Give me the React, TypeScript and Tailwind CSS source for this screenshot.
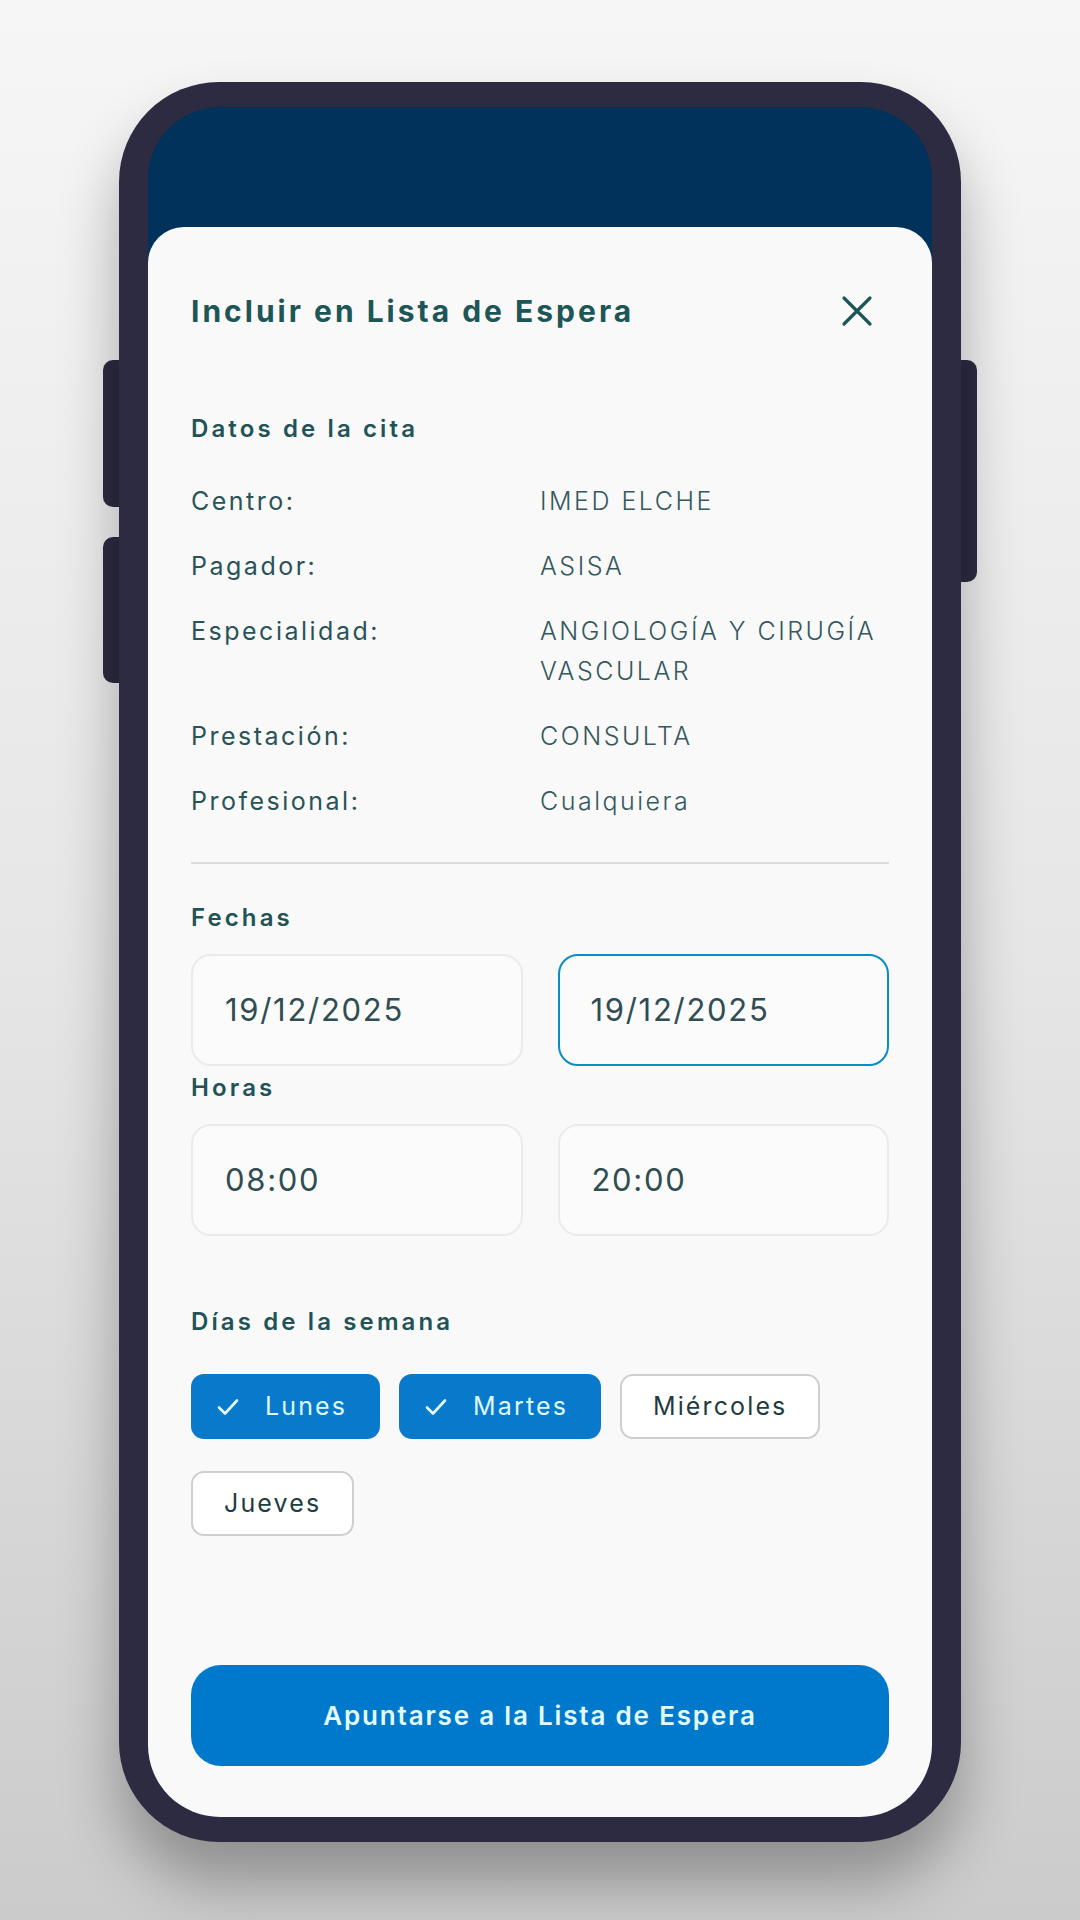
const rows = [
  { label: "Centro:", value: ["IMED ELCHE"] },
  { label: "Pagador:", value: ["ASISA"] },
  { label: "Especialidad:", value: ["ANGIOLOGÍA Y CIRUGÍA", "VASCULAR"] },
  { label: "Prestación:", value: ["CONSULTA"] },
  { label: "Profesional:", value: ["Cualquiera"] },
];

const days = [
  { name: "Lunes", on: true },
  { name: "Martes", on: true },
  { name: "Miércoles", on: false },
  { name: "Jueves", on: false },
];

function CloseIcon() {
  return (
    <svg width="32" height="32" viewBox="0 0 32 32" fill="none">
      <path d="M3 3 L29 29 M29 3 L3 29" stroke="#1d5656" strokeWidth="3.2" strokeLinecap="round" />
    </svg>
  );
}

function Check() {
  return (
    <svg width="22" height="18" viewBox="0 0 22 18" fill="none">
      <path d="M2 9.5 L8 15.5 L20 2.5" stroke="#e4fbff" strokeWidth="2.6" strokeLinecap="round" strokeLinejoin="round" />
    </svg>
  );
}

function Field({ value, active }: { value: string; active?: boolean }) {
  return (
    <div
      className={
        active
          ? "h-[112px] rounded-[20px] border-[2.5px] border-[#0a8cc4] bg-[#fbfbfb] flex items-center pl-[31px] text-[31px] tracking-[0.055em] text-[#2f4d53]"
          : "h-[112px] rounded-[20px] border-2 border-[#ebebeb] bg-[#fbfbfb] flex items-center pl-[32px] text-[31px] tracking-[0.055em] text-[#2f4d53]"
      }
    >
      {value}
    </div>
  );
}

function SectionTitle({ children, className }: { children: string; className: string }) {
  return (
    <h2 className={"text-[24px] leading-[32px] font-semibold tracking-[0.13em] text-[#1f5357] " + className}>
      {children}
    </h2>
  );
}

export default function App() {
  return (
    <div
      className="w-[1080px] h-[1920px] bg-linear-to-b from-[#f6f6f6] via-[#e6e6e6] to-[#cbcbcb] pt-[82px] overflow-hidden"
      style={{ fontFamily: "Inter, 'Noto Sans', sans-serif" }}
    >
      <div className="relative mx-auto w-[842px] h-[1760px]">
        {/* side buttons */}
        <div className="absolute left-[-16px] top-[278px] w-[20px] h-[147px] rounded-l-[10px] bg-[#2c2b41]" />
        <div className="absolute left-[-16px] top-[455px] w-[20px] h-[146px] rounded-l-[10px] bg-[#2c2b41]" />
        <div className="absolute right-[-16px] top-[278px] w-[20px] h-[222px] rounded-r-[10px] bg-[#2c2b41]" />

        <div className="relative w-full h-full rounded-[100px] bg-[#2c2b41] px-[29px] py-[25px] shadow-[0_40px_60px_rgba(0,0,0,0.30)]">
          <div className="w-full h-full rounded-[72px] overflow-hidden bg-[#00325c] flex flex-col">
            <div className="h-[120px] shrink-0" />
            <div className="flex-1 bg-[#f9f9f9] rounded-t-[36px] px-[43px] pt-[64px]">
              {/* header */}
              <div className="flex items-center justify-between h-[40px]">
                <h1 className="text-[30px] leading-[40px] font-bold tracking-[0.1em] text-[#1d5656]">
                  Incluir en Lista de Espera
                </h1>
                <div className="mr-[16px]">
                  <CloseIcon />
                </div>
              </div>

              <SectionTitle className="mt-[82px]">Datos de la cita</SectionTitle>

              <div className="mt-[36px] flex flex-col gap-[25px]">
                {rows.map((r) => (
                  <div key={r.label} className="flex text-[25px] leading-[40px] tracking-[0.1em]">
                    <div className="w-[349px] text-[#2a5358]">{r.label}</div>
                    <div className="flex-1 text-[#35585d] font-light">
                      {r.value.map((v) => (
                        <div key={v}>{v}</div>
                      ))}
                    </div>
                  </div>
                ))}
              </div>

              <div className="mt-[41px] h-[2px] bg-[#dcdcdc]" />

              <SectionTitle className="mt-[38px]">Fechas</SectionTitle>
              <div className="mt-[20px] grid grid-cols-2 gap-[35px]">
                <Field value="19/12/2025" />
                <Field value="19/12/2025" active />
              </div>

              <SectionTitle className="mt-[6px]">Horas</SectionTitle>
              <div className="mt-[20px] grid grid-cols-2 gap-[35px]">
                <Field value="08:00" />
                <Field value="20:00" />
              </div>

              <SectionTitle className="mt-[70px]">Días de la semana</SectionTitle>
              <div className="mt-[36px] flex flex-wrap w-[660px] gap-x-[19px] gap-y-[32px]">
                {days.map((d) =>
                  d.on ? (
                    <div
                      key={d.name}
                      className="h-[65px] rounded-[13px] bg-[#0979cb] flex items-center pl-[26px] pr-[33px] gap-[26px] text-[25px] tracking-[0.085em] text-[#dcfbff]"
                    >
                      <Check />
                      {d.name}
                    </div>
                  ) : (
                    <div
                      key={d.name}
                      className="h-[65px] rounded-[13px] border-2 border-[#cfcfcf] bg-white flex items-center px-[31px] text-[25px] tracking-[0.085em] text-[#1f3c41]"
                    >
                      {d.name}
                    </div>
                  )
                )}
              </div>

              <button className="mt-[129px] w-full h-[101px] rounded-[30px] bg-[#0079cc] text-[26px] font-semibold tracking-[0.07em] text-[#e2fbff]">
                Apuntarse a la Lista de Espera
              </button>
            </div>
          </div>
        </div>
      </div>
    </div>
  );
}
